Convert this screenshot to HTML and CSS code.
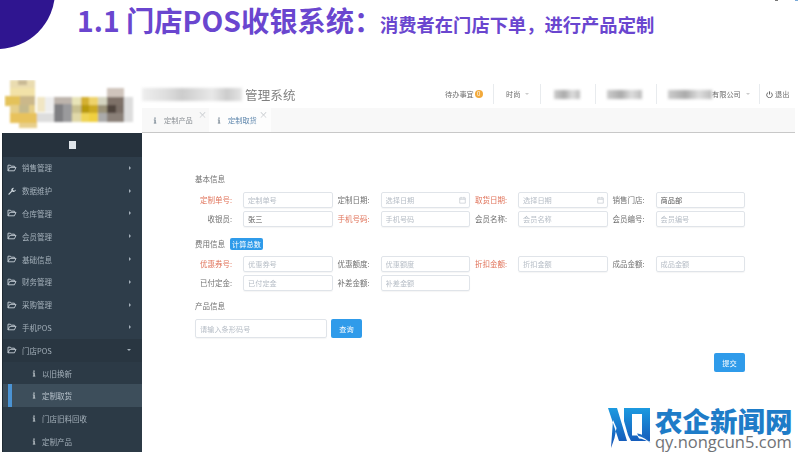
FILE: index.html
```html
<!DOCTYPE html>
<html lang="zh-CN">
<head>
    <meta charset="UTF-8">
    <meta name="viewport" content="width=device-width, initial-scale=1.0">
    <title>门店POS收银系统</title>
    <link rel="stylesheet" href="styles.css">
</head>
<body>
    <svg class="defs" width="0" height="0" aria-hidden="true">
        <defs>
            <symbol id="i-folder" viewBox="0 0 12 10">
                <path d="M1 8.500V1.500h3l1 1.200h4v1.500M1 8.500h8l2-4.300H3.200L1 8.500z" fill="none" stroke="currentColor" stroke-width="1.100"/>
            </symbol>
            <symbol id="i-wrench" viewBox="0 0 12 10">
                <path d="M1 9l4.200-4.300a2.700 2.700 0 0 1 3.400-3.500L7 2.800l.8 1.500 1.700.2 1.300-1.500a2.700 2.700 0 0 1-4.400 2.500L2.500 9.800z" fill="currentColor"/>
            </symbol>
            <symbol id="i-info" viewBox="0 0 6 10">
                <path d="M2 .5h2v1.800H2zM1.200 3.500h2.800v4.800h1v1.200H1.200V8.300h1V4.700h-1z" fill="currentColor"/>
            </symbol>
            <symbol id="i-cal" viewBox="0 0 10 10">
                <path d="M1 2h8v7.500H1zM1 4h8M3 .5v2.500M7 .5v2.500" fill="none" stroke="currentColor"/>
            </symbol>
        </defs>
    </svg>

    <div class="slide">
        <div class="corner"></div>
        <div class="speck speck-a"></div>
        <div class="speck speck-b"></div>

        <header class="slide-title">
            <span class="title-main">1.1 门店POS收银系统：</span>
            <span class="title-sub">消费者在门店下单，进行产品定制</span>
        </header>

        <div class="app">
            <div class="logo">
                <svg width="132" height="52" viewBox="0 0 132 52">
                    <defs>
                        <filter id="soft"><feGaussianBlur stdDeviation="1.100"/></filter>
                    </defs>
                    <g filter="url(#soft)">
                        <rect x="6" y="0" width="25" height="8" fill="#eadcb0"/>
                        <rect x="14" y="0" width="9" height="5" fill="#c9b994"/>
                        <rect x="6" y="8" width="25" height="9" fill="#f2e2a8"/>
                        <rect x="1" y="16" width="15" height="10" fill="#e4c25a"/>
                        <rect x="16" y="16" width="15" height="10" fill="#cbb88a"/>
                        <rect x="6" y="25" width="25" height="8" fill="#e6cf88"/>
                        <rect x="15" y="25" width="10" height="9" fill="#c4b98c"/>
                        <rect x="6" y="33" width="27" height="10" fill="#e8c25c"/>
                        <rect x="15" y="43" width="18" height="5" fill="#e8cf8c"/>
                        <rect x="33" y="17" width="8" height="15" fill="#f1e6c4"/>
                        <rect x="41" y="17" width="9" height="15" fill="#eeeeee"/>
                        <rect x="33" y="33" width="17" height="9" fill="#dddddd"/>
                        <rect x="50" y="17" width="18" height="7" fill="#bdb4ac"/>
                        <rect x="50" y="24" width="9" height="18" fill="#7f7f82"/>
                        <rect x="59" y="24" width="9" height="18" fill="#9a9a9c"/>
                        <rect x="68" y="17" width="9" height="8" fill="#e8e4b8"/>
                        <rect x="68" y="25" width="9" height="8" fill="#c8c090"/>
                        <rect x="68" y="33" width="9" height="9" fill="#e0d8a8"/>
                        <rect x="77" y="17" width="8" height="8" fill="#d4b030"/>
                        <rect x="77" y="25" width="8" height="8" fill="#b89a10"/>
                        <rect x="77" y="33" width="8" height="9" fill="#efd455"/>
                        <rect x="85" y="17" width="9" height="8" fill="#eed36a"/>
                        <rect x="85" y="25" width="9" height="8" fill="#ccaa22"/>
                        <rect x="85" y="33" width="9" height="9" fill="#f0d040"/>
                        <rect x="94" y="17" width="9" height="8" fill="#d4d4c0"/>
                        <rect x="94" y="25" width="9" height="8" fill="#9a9278"/>
                        <rect x="94" y="33" width="9" height="9" fill="#aaaaaa"/>
                        <rect x="103" y="8" width="17" height="9" fill="#cfc4bc"/>
                        <rect x="103" y="17" width="17" height="8" fill="#7e7168"/>
                        <rect x="103" y="25" width="9" height="8" fill="#50443c"/>
                        <rect x="112" y="25" width="8" height="8" fill="#7a6e66"/>
                        <rect x="103" y="33" width="17" height="9" fill="#8a8078"/>
                        <rect x="120" y="17" width="9" height="25" fill="#dddddd"/>
                    </g>
                </svg>
            </div>

            <div class="top">
                <div class="topbar">
                    <div class="brand">
                        <span class="smear smear-brand"></span>
                        <span>管理系统</span>
                    </div>
                    <div class="top-item top-todo">待办事宜<span class="badge">0</span></div>
                    <div class="top-item top-style">时尚<span class="caret"></span></div>
                    <div class="top-item top-a"><span class="smear smear-a"></span></div>
                    <div class="top-item top-b"><span class="smear smear-b"></span></div>
                    <div class="top-item top-co"><span class="smear smear-co"></span>有限公司<span class="caret"></span></div>
                    <div class="top-item top-out">
                        <svg width="7" height="7" viewBox="0 0 10 10"><path d="M3 2.200a4 4 0 1 0 4 0M5 .5v4.500" fill="none" stroke="#555" stroke-width="1.300"/></svg>
                        退出
                    </div>
                </div>
                <div class="tabs">
                    <div class="tab">
                        <svg class="tab-icon"><use href="#i-info"/></svg>定制产品<span class="tab-x">×</span>
                    </div>
                    <div class="tab tab-active">
                        <svg class="tab-icon"><use href="#i-info"/></svg>定制取货<span class="tab-x">×</span>
                    </div>
                </div>
            </div>

            <nav class="sidebar">
                <div class="side-head"><span class="side-toggle"></span></div>
                <a class="side-item"><svg class="side-icon"><use href="#i-folder"/></svg>销售管理<span class="arrow"></span></a>
                <a class="side-item"><svg class="side-icon"><use href="#i-wrench"/></svg>数据维护<span class="arrow"></span></a>
                <a class="side-item"><svg class="side-icon"><use href="#i-folder"/></svg>仓库管理<span class="arrow"></span></a>
                <a class="side-item"><svg class="side-icon"><use href="#i-folder"/></svg>会员管理<span class="arrow"></span></a>
                <a class="side-item"><svg class="side-icon"><use href="#i-folder"/></svg>基础信息<span class="arrow"></span></a>
                <a class="side-item"><svg class="side-icon"><use href="#i-folder"/></svg>财务管理<span class="arrow"></span></a>
                <a class="side-item"><svg class="side-icon"><use href="#i-folder"/></svg>采购管理<span class="arrow"></span></a>
                <a class="side-item"><svg class="side-icon"><use href="#i-folder"/></svg>手机POS<span class="arrow"></span></a>
                <a class="side-item side-open"><svg class="side-icon"><use href="#i-folder"/></svg>门店POS<span class="arrow arrow-down"></span></a>
                <a class="side-sub"><svg class="sub-icon"><use href="#i-info"/></svg>以旧换新</a>
                <a class="side-sub side-current"><svg class="sub-icon"><use href="#i-info"/></svg>定制取货</a>
                <a class="side-sub"><svg class="sub-icon"><use href="#i-info"/></svg>门店旧料回收</a>
                <a class="side-sub"><svg class="sub-icon"><use href="#i-info"/></svg>定制产品</a>
            </nav>

            <main class="content">
                <h4 class="section-title">基本信息</h4>
                <div class="form-grid">
                    <label class="req">定制单号:</label><input placeholder="定制单号">
                    <label>定制日期:</label><div class="date"><input placeholder="选择日期"><svg class="date-icon"><use href="#i-cal"/></svg></div>
                    <label class="req">取货日期:</label><div class="date"><input placeholder="选择日期"><svg class="date-icon"><use href="#i-cal"/></svg></div>
                    <label>销售门店:</label><input value="商品部">
                    <label>收银员:</label><input value="张三">
                    <label class="req">手机号码:</label><input placeholder="手机号码">
                    <label>会员名称:</label><input placeholder="会员名称">
                    <label>会员编号:</label><input placeholder="会员编号">
                </div>

                <div class="section-row">
                    <h4 class="section-title">费用信息</h4>
                    <button class="btn btn-small">计算总数</button>
                </div>
                <div class="form-grid">
                    <label class="req">优惠券号:</label><input placeholder="优惠券号">
                    <label>优惠额度:</label><input placeholder="优惠额度">
                    <label class="req">折扣金额:</label><input placeholder="折扣金额">
                    <label>成品金额:</label><input placeholder="成品金额">
                    <label>已付定金:</label><input placeholder="已付定金">
                    <label>补差金额:</label><input placeholder="补差金额">
                </div>

                <h4 class="section-title section-product">产品信息</h4>
                <div class="search-row">
                    <input class="search" placeholder="请输入条形码号">
                    <button class="btn">查询</button>
                </div>

                <div class="actions">
                    <button class="btn">提交</button>
                </div>
            </main>
        </div>

        <div class="watermark">
            <svg class="wm-mark" width="43" height="41" viewBox="0 0 43 41">
                <defs>
                    <linearGradient id="wm" x1="0" y1="0" x2="0" y2="1">
                        <stop offset="0" stop-color="#1c9ae0"/>
                        <stop offset="1" stop-color="#1450b4"/>
                    </linearGradient>
                </defs>
                <path d="M0 0H9L19 33H11zM5 12l3.500 8-2 10-3.500 10zM16 0H42V33H23l-3-6-4-14zM24 6V27.500H34V6z" fill="url(#wm)" fill-rule="evenodd"/>
                <path d="M29 27c5 0 9 3 13 8-4-3-8-4.500-11-4.500z" fill="#fff"/>
                <path d="M29 25.500c5 0 9.500 3.500 13.500 9.500-4-3.500-8-6-12-7z" fill="#1c6cc4"/>
            </svg>
            <div class="wm-text">
                <div class="wm-cn">农企新闻网</div>
                <div class="wm-en">qy.nongcun5.com</div>
            </div>
        </div>
    </div>
</body>
</html>
```

FILE: styles.css
```css
* {
    box-sizing: border-box;
}
html, body {
    margin: 0;
    padding: 0;
}
body {
    font-family: "Noto Sans CJK SC", "Noto Sans", sans-serif;
    background-color: #fff;
}
.defs {
    display: block;
    height: 0;
}
.slide {
    position: relative;
    width: 800px;
    height: 455px;
    overflow: hidden;
    background-color: #fff;
}

/* slide heading */
.corner {
    position: absolute;
    left: -60px;
    top: -66px;
    width: 115px;
    height: 115px;
    border-radius: 50%;
    background-color: #2f1590;
}
.speck {
    position: absolute;
    top: 0;
    width: 3px;
    height: 1px;
}
.speck-a {
    left: 775px;
    background-color: #777;
}
.speck-b {
    left: 795px;
    background-color: #7aaad8;
}
.slide-title {
    display: flex;
    align-items: baseline;
    height: 80px;
    padding: 1px 0 0 77px;
    color: #6a46cf;
    font-weight: 700;
    line-height: 38px;
}
.title-main {
    font-size: 28.300px;
    width: 303px;
    white-space: nowrap;
}
.title-sub {
    font-size: 18.300px;
    white-space: nowrap;
}

/* app screenshot */
.app {
    display: grid;
    grid-template-columns: 142px 1fr;
    grid-template-rows: 53px 319px;
    filter: blur(0.6px);
}
.logo {
    padding: 0 0 0 4px;
}
.top {
    margin-right: 5px;
}
.topbar {
    display: flex;
    align-items: center;
    height: 28px;
    font-size: 7.200px;
    color: #6c6c6c;
}
.brand {
    display: flex;
    align-items: center;
    width: 303px;
    font-size: 12.500px;
    color: #808080;
    letter-spacing: 0.150px;
}
.smear {
    display: inline-block;
    height: 9px;
    background: linear-gradient(90deg, #ccc, #aaa 40%, #ddd 70%, #bbb);
    filter: blur(1.500px);
}
.smear-brand {
    width: 100px;
    height: 13px;
    margin-right: 3px;
    background: linear-gradient(90deg, #eee, #ddd 25%, #ccc 40%, #e8e8e8 70%, #ccc 85%, #e4e4e4);
}
.smear-a {
    width: 26px;
}
.smear-b {
    width: 35px;
}
.smear-co {
    width: 44px;
}
.top-item {
    display: flex;
    align-items: center;
    height: 20px;
    white-space: nowrap;
    border-right: 1px solid #e8ebee;
}
.top-todo {
    width: 49px;
}
.badge {
    display: inline-block;
    width: 8px;
    height: 8px;
    margin-left: 1px;
    border-radius: 50%;
    background-color: #f2a93b;
    color: #fff;
    font-size: 6px;
    line-height: 8px;
    text-align: center;
}
.top-style {
    width: 47px;
    padding-left: 12px;
}
.top-a {
    width: 55px;
    padding-left: 13px;
}
.top-b {
    width: 61px;
    padding-left: 11px;
}
.top-co {
    width: 103px;
    padding-left: 11px;
}
.top-out {
    gap: 2px;
    padding-left: 6px;
    border-right: 0;
}
.caret {
    width: 0;
    height: 0;
    margin-left: 5px;
    border-left: 2px solid transparent;
    border-right: 2px solid transparent;
    border-top: 2px solid #ccc;
}
.tabs {
    display: flex;
    height: 25px;
    background-color: #f8f8f8;
    border-bottom: 1px solid #c8c8c8;
    font-size: 7.200px;
    color: #8a8f94;
}
.tab {
    display: flex;
    align-items: center;
    position: relative;
    width: 68px;
    padding-left: 11px;
}
.tab-active {
    width: 62px;
    padding-left: 8px;
    margin-left: -1px;
    background-color: #fdfdfd;
    color: #5f87ad;
}
.tab-icon {
    width: 4px;
    height: 7px;
    margin-right: 7px;
    color: #6f7f8c;
}
.tab-x {
    position: absolute;
    right: 3px;
    top: 2px;
    font-size: 9px;
    line-height: 10px;
    color: #c4c8cc;
}

/* side menu */
.sidebar {
    margin-left: 2px;
    background-color: #2c3a46;
    overflow: hidden;
    font-size: 7.500px;
    color: #a4b0ba;
    border-left: 1px solid #1f2a33;
}
.side-head {
    display: flex;
    align-items: center;
    justify-content: center;
    height: 23.500px;
    background-color: #26323d;
}
.side-toggle {
    width: 7px;
    height: 8px;
    background-color: #dfe5ea;
}
.side-item, .side-sub {
    display: flex;
    align-items: center;
    height: 22.800px;
}
.side-item {
    padding: 0 11px 0 4px;
    background-color: #2e3d4a;
}
.side-open {
    background-color: #293641;
}
.side-sub {
    padding-left: 29px;
}
.side-current {
    position: relative;
    background-color: #3d4e5b;
    color: #b8c3cc;
}
.side-current::before {
    content: "";
    position: absolute;
    left: 5px;
    top: 0;
    width: 4px;
    height: 100%;
    background-color: #4b93d3;
}
.side-icon {
    width: 10px;
    height: 8px;
    margin-right: 5px;
    color: #c9d2d9;
}
.sub-icon {
    width: 4px;
    height: 7px;
    margin-right: 6px;
    color: #d0d7dc;
}
.arrow {
    width: 0;
    height: 0;
    margin-left: auto;
    border-top: 2px solid transparent;
    border-bottom: 2px solid transparent;
    border-left: 2.500px solid #a4b0ba;
}
.arrow-down {
    border-left: 2.500px solid transparent;
    border-right: 2.500px solid transparent;
    border-top: 2.500px solid #a4b0ba;
    border-bottom: 0;
}

/* form */
.content {
    padding: 40px 55px 0 53px;
    font-size: 7.500px;
    color: #707070;
}
.section-title {
    margin: 0;
    font-size: 7.500px;
    font-weight: 400;
    line-height: 12px;
    color: #707070;
}
.form-grid {
    display: grid;
    grid-template-columns: repeat(4, 48px 89.500px);
    grid-auto-rows: 16px;
    row-gap: 3px;
    margin-top: 7px;
}
.form-grid label {
    padding-right: 11px;
    line-height: 16px;
    text-align: right;
    white-space: nowrap;
}
.form-grid .req {
    color: #e0735a;
}
input {
    display: block;
    width: 100%;
    height: 100%;
    min-width: 0;
    padding: 0 4px;
    border: 1px solid #e0e4e9;
    border-radius: 2px;
    box-shadow: 0 1px 1px rgba(0,0,0,0.04);
    font-family: inherit;
    font-size: 7.200px;
    color: #555;
    background-color: #fff;
}
input::placeholder {
    color: #b6bdc6;
}
.date {
    position: relative;
}
.date-icon {
    position: absolute;
    right: 4px;
    top: 4px;
    width: 7px;
    height: 8px;
    color: #c4cad0;
}
.section-row {
    display: flex;
    align-items: center;
    gap: 5px;
    margin-top: 11px;
    margin-bottom: -1px;
}
.btn {
    width: 31px;
    height: 19px;
    padding: 0;
    border: 0;
    border-radius: 2px;
    background-color: #2f9bea;
    color: #fff;
    font-family: inherit;
    font-size: 7.200px;
}
.btn-small {
    width: 33px;
    height: 12px;
}
.section-product {
    margin-top: 9px;
}
.search-row {
    display: flex;
    gap: 4px;
    height: 19px;
    margin-top: 7px;
}
.search {
    width: 132px;
}
.actions {
    display: flex;
    justify-content: flex-end;
    margin-top: 15px;
}

/* watermark over the page corner */
.watermark {
    position: absolute;
    left: 608px;
    top: 407px;
    display: flex;
    gap: 4px;
}
.wm-mark {
    margin-top: 1px;
}
.wm-cn {
    font-size: 27.500px;
    font-weight: 900;
    line-height: 26px;
    color: #1e7cc8;
    white-space: nowrap;
}
.wm-en {
    font-family: "Open Sans", sans-serif;
    font-size: 16.500px;
    line-height: 17px;
    color: #6f7276;
    white-space: nowrap;
}
```
